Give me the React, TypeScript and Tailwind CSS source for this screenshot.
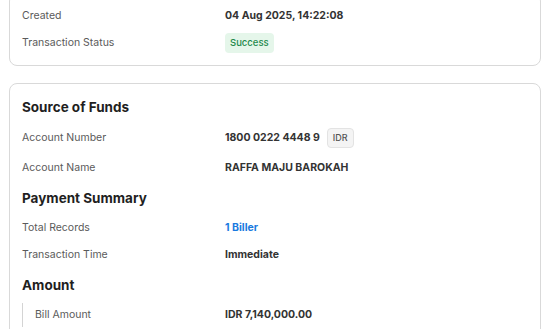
const FONT = { fontFamily: 'Inter, "Noto Sans", sans-serif' };

function Row({ label, children, indent }: { label: string; children: React.ReactNode; indent?: boolean }) {
    return (
        <div className="flex h-[20px] items-center">
            {indent ? (
                <div className="flex w-[203px] items-center self-stretch">
                    <div className="h-[24px] w-px bg-[#d4d4d4]" />
                    <span className="pl-[12px] text-[10.5px] text-[#5a5a5a]">{label}</span>
                </div>
            ) : (
                <span className="w-[203px] text-[10.5px] text-[#5a5a5a]">{label}</span>
            )}
            <div className="flex items-center text-[10.5px] font-bold text-[#333333]">{children}</div>
        </div>
    );
}

function Heading({ children }: { children: React.ReactNode }) {
    return <div className="flex h-[26px] items-center text-[13.5px] font-bold text-[#1f1f1f]">{children}</div>;
}

export default function App() {
    return (
        <div className="min-h-screen bg-white pl-[9px] pr-[2px]" style={FONT}>
            {/* Transaction details card (scrolled, top cut off) */}
            <div className="-mt-[7px] rounded-lg border border-[#d9d9d9] px-3 pt-3 pb-3">
                <div className="flex flex-col gap-[7px]">
                    <Row label="Created">04 Aug 2025, 14:22:08</Row>
                    <Row label="Transaction Status">
                        <span className="rounded-[4px] bg-[#e5f6ea] px-[5px] py-[3px] text-[9.5px] font-medium text-[#1f8a4c]">
                            Success
                        </span>
                    </Row>
                </div>
            </div>

            <div className="mt-[17px] rounded-lg border border-[#d9d9d9] px-3 pt-[10px] pb-6">
                <div className="flex flex-col gap-[7px]">
                    <Heading>Source of Funds</Heading>
                    <div className="-mt-[2px] flex h-[26px] items-center">
                        <span className="w-[203px] text-[10.5px] text-[#5a5a5a]">Account Number</span>
                        <div className="flex items-center gap-[7px] text-[10.5px] font-bold text-[#333333]">
                            1800 0222 4448 9
                            <span className="rounded-[4px] border border-[#e3e3e3] bg-[#f4f4f4] px-[5px] py-[2px] text-[9px] font-medium text-[#555555]">
                                IDR
                            </span>
                        </div>
                    </div>
                    <Row label="Account Name">RAFFA MAJU BAROKAH</Row>
                    <Heading>Payment Summary</Heading>
                    <Row label="Total Records">
                        <span className="text-[#1a7ae0]">1 Biller</span>
                    </Row>
                    <Row label="Transaction Time">Immediate</Row>
                    <Heading>Amount</Heading>
                    <Row label="Bill Amount" indent>
                        IDR 7,140,000.00
                    </Row>
                </div>
            </div>
        </div>
    );
}
